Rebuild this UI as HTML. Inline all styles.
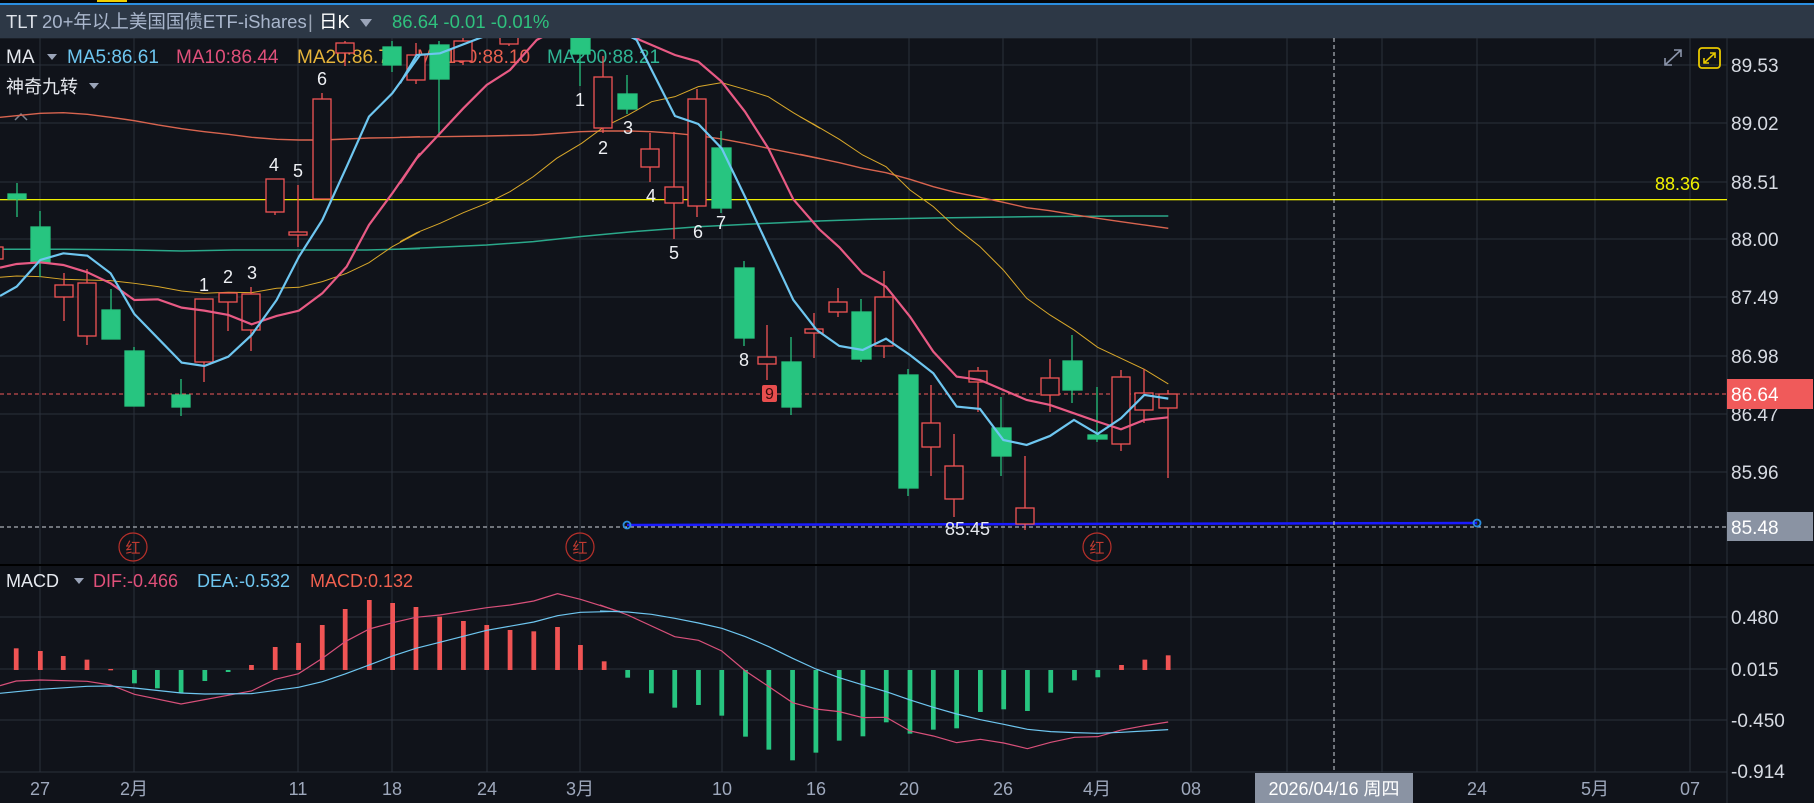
<!DOCTYPE html>
<html><head><meta charset="utf-8"><style>
html,body{margin:0;padding:0;background:#10131a;width:1814px;height:803px;overflow:hidden}
svg{display:block}
text{font-family:"Liberation Sans","Noto Sans CJK SC",sans-serif}
</style></head><body>
<svg width="1814" height="803" viewBox="0 0 1814 803" xmlns="http://www.w3.org/2000/svg">
<defs>
<clipPath id="mc"><rect x="0" y="38" width="1727" height="527"/></clipPath>
<clipPath id="dc"><rect x="0" y="566" width="1727" height="206"/></clipPath>
</defs>
<rect width="1814" height="803" fill="#10131a"/>
<!-- top bar -->
<rect x="0" y="0" width="1814" height="3" fill="#050608"/>
<rect x="97" y="0" width="30" height="2" fill="#f0d000"/>
<rect x="0" y="3" width="1814" height="2" fill="#2a8ee0"/>
<rect x="0" y="5" width="1814" height="33" fill="#2d3846"/>
<rect x="0" y="38" width="1814" height="1" fill="#1a1f27"/>
<text y="28" font-size="18.5"><tspan x="6" fill="#dfe3ea">TLT</tspan><tspan x="42" fill="#a9b6cc">20+年以上美国国债ETF-iShares</tspan><tspan x="308" fill="#9aa4b4">|</tspan><tspan x="319" fill="#ffffff">日K</tspan></text>
<path d="M360 19 L372 19 L366 27 Z" fill="#9aa4b8"/>
<text x="392" y="28" font-size="18.5" fill="#2fc27e">86.64 -0.01 -0.01%</text>

<!-- grid main -->
<g stroke="#2a303b" stroke-width="1">
<path d="M0 65H1727M0 123H1727M0 182H1727M0 239H1727M0 297H1727M0 356H1727M0 414H1727M0 472H1727"/>
<path d="M40 38V565M134 38V565M298 38V565M392 38V565M487 38V565M580 38V565M722 38V565M816 38V565M909 38V565M1003 38V565M1097 38V565M1191 38V565M1287 38V565M1382 38V565M1477 38V565M1595 38V565M1690 38V565"/>
<path d="M0 617H1727M0 669H1727M0 720H1727M0 772H1727"/>
<path d="M40 566V772M134 566V772M298 566V772M392 566V772M487 566V772M580 566V772M722 566V772M816 566V772M909 566V772M1003 566V772M1097 566V772M1191 566V772M1287 566V772M1382 566V772M1477 566V772M1595 566V772M1690 566V772"/>
<path d="M1727 38V803"/>
</g>
<rect x="0" y="564" width="1814" height="2" fill="#000"/>

<!-- legend -->
<text y="63" font-size="19"><tspan x="6" fill="#e6e9ef">MA</tspan><tspan x="67" fill="#6ec6f0">MA5:86.61</tspan><tspan x="176" fill="#e0507a">MA10:86.44</tspan><tspan x="297" fill="#e6b43a">MA20:86.73</tspan><tspan x="417" fill="#e8604f">MA100:88.10</tspan><tspan x="547" fill="#2fb594">MA200:88.21</tspan></text>
<path d="M47 54 L57 54 L52 60 Z" fill="#9aa4b8"/>
<text x="6" y="93" font-size="18" fill="#e6e9ef">神奇九转</text>
<path d="M89 83 L99 83 L94 89 Z" fill="#9aa4b8"/>
<path d="M15 120 L21 114 L27 120" fill="none" stroke="#7a8290" stroke-width="1.5"/>

<g clip-path="url(#mc)">
<rect x="0" y="199" width="1727" height="1.3" fill="#f0f000"/>
<g fill="none" stroke="#2aa88a" stroke-width="1.5">
<polyline vector-effect="non-scaling-stroke" transform="translate(0,40) scale(0.3333)" points="0,628 200,628 400,630 545,633 700,630 900,630 1100,630 1260,626"/>
<polyline vector-effect="non-scaling-stroke" transform="translate(400,40) scale(0.3333)" points="0,627 260,615 400,605 540,590 700,575 900,560 1100,550 1260,543"/>
<polyline vector-effect="non-scaling-stroke" transform="translate(800,40) scale(0.3333)" points="0,545 200,538 400,534 700,530 1000,528 1105,528"/>
</g>
<g fill="none" stroke="#d8644f" stroke-width="1.4">
<polyline vector-effect="non-scaling-stroke" transform="translate(0,40) scale(0.3333)" points="0,232 121,220 190,218 262,223 332,232 403,242 474,255 545,266 613,275 685,283 755,292 830,298 897,300 967,300 1040,297 1107,294 1177,293 1260,290"/>
<polyline vector-effect="non-scaling-stroke" transform="translate(400,40) scale(0.3333)" points="0,292 120,290 260,288 400,285 540,275 613,273 685,273 755,275 825,280 895,287 965,297 1035,310 1105,325 1180,340 1260,356"/>
<polyline vector-effect="non-scaling-stroke" transform="translate(800,40) scale(0.3333)" points="0,343 118,368 188,385 258,398 330,418 400,440 470,458 540,472 610,487 680,503 750,512 822,524 893,535 963,545 1033,555 1105,565"/>
</g>
<g fill="none" stroke="#d9a82a" stroke-width="1">
<polyline vector-effect="non-scaling-stroke" transform="translate(0,40) scale(0.3333)" points="0,712 50,708 121,710 190,718 262,720 332,722 403,730 474,740 545,753 613,760 685,757 755,758 830,745 897,742 967,725 1040,700 1107,668 1177,620 1260,575"/>
<polyline vector-effect="non-scaling-stroke" transform="translate(400,40) scale(0.3333)" points="0,605 50,578 120,550 190,518 260,490 330,455 400,410 470,355 545,310 613,260 685,225 755,185 825,170 895,140 965,128 1035,148 1105,170 1180,218 1260,265"/>
<polyline vector-effect="non-scaling-stroke" transform="translate(800,40) scale(0.3333)" points="0,230 45,255 118,298 188,345 258,380 330,450 400,500 470,565 540,620 610,690 680,775 750,825 822,870 893,922 963,955 1033,988 1105,1032"/>
</g>

<path d="M0 394H1727" stroke="#f05a5a" stroke-width="1" stroke-dasharray="4,3"/>
<path d="M0 527H1727" stroke="#d0d4dc" stroke-width="1" stroke-dasharray="4,3"/>
<path d="M627 525 L1477 523" stroke="#1a1aff" stroke-width="2.5"/>
<circle cx="627" cy="525" r="3.5" fill="none" stroke="#2a8ee0" stroke-width="1.8"/>
<circle cx="1477" cy="523" r="3.5" fill="none" stroke="#2a8ee0" stroke-width="1.8"/>

<g stroke-width="1.3">
<g stroke="#f05454" fill="#10131a">
<path d="M-6 240V262"/><rect x="-15" y="247" width="18" height="12"/>
<path d="M64 273V321"/><rect x="55" y="285" width="18" height="12"/>
<path d="M87 269V345"/><rect x="78" y="283" width="18" height="53"/>
<path d="M204 299V382"/><rect x="195" y="299" width="18" height="63"/>
<path d="M228 293V331"/><rect x="219" y="293" width="18" height="9"/>
<path d="M251 287V351"/><rect x="242" y="294" width="18" height="36"/>
<path d="M275 179V215"/><rect x="266" y="179" width="18" height="33"/>
<path d="M298 185V247"/><rect x="289" y="232" width="18" height="3"/>
<path d="M322 93V199"/><rect x="313" y="99" width="18" height="100"/>
<path d="M345 41V66"/><rect x="336" y="43" width="18" height="10"/>
<path d="M416 43V84"/><rect x="407" y="55" width="18" height="25"/>
<path d="M463 38V65"/><rect x="454" y="41" width="18" height="20"/>
<path d="M509 36V46"/><rect x="500" y="36" width="18" height="8"/>
<path d="M603 56V133"/><rect x="594" y="77" width="18" height="51"/>
<path d="M650 133V182"/><rect x="641" y="149" width="18" height="18"/>
<path d="M674 132V239"/><rect x="665" y="187" width="18" height="16"/>
<path d="M697 89V217"/><rect x="688" y="99" width="18" height="107"/>
<path d="M767 325V380"/><rect x="758" y="357" width="18" height="7"/>
<path d="M814 313V358"/><rect x="805" y="329" width="18" height="4"/>
<path d="M838 288V317"/><rect x="829" y="302" width="18" height="10"/>
<path d="M884 271V358"/><rect x="875" y="297" width="18" height="49"/>
<path d="M931 385V476"/><rect x="922" y="423" width="18" height="24"/>
<path d="M954 434V517"/><rect x="945" y="466" width="18" height="33"/>
<path d="M978 367V412"/><rect x="969" y="371" width="18" height="11"/>
<path d="M1025 456V530"/><rect x="1016" y="508" width="18" height="16"/>
<path d="M1050 359V412"/><rect x="1041" y="378" width="18" height="17"/>
<path d="M1121 370V451"/><rect x="1112" y="377" width="18" height="67"/>
<path d="M1144 369V423"/><rect x="1135" y="393" width="18" height="17"/>
<path d="M1168 390V478"/><rect x="1159" y="394" width="18" height="14"/>
</g>
<g stroke="#27c27e" fill="#27c580">
<path d="M17 183V217"/><rect x="8" y="194" width="18" height="5"/>
<path d="M40 211V277"/><rect x="31" y="227" width="19" height="36"/>
<path d="M111 289V339"/><rect x="102" y="310" width="18" height="29"/>
<path d="M134 347V406"/><rect x="125" y="351" width="19" height="55"/>
<path d="M181 379V416"/><rect x="172" y="395" width="18" height="12"/>
<path d="M392 41V72"/><rect x="383" y="47" width="18" height="18"/>
<path d="M439 41V136"/><rect x="430" y="45" width="19" height="34"/>
<path d="M580 36V86"/><rect x="571" y="36" width="19" height="18"/>
<path d="M627 75V114"/><rect x="618" y="94" width="19" height="15"/>
<path d="M721 131V213"/><rect x="712" y="148" width="19" height="60"/>
<path d="M744 261V346"/><rect x="735" y="268" width="19" height="70"/>
<path d="M791 337V415"/><rect x="782" y="362" width="19" height="45"/>
<path d="M861 299V362"/><rect x="852" y="312" width="19" height="47"/>
<path d="M908 369V496"/><rect x="899" y="375" width="19" height="113"/>
<path d="M1001 397V476"/><rect x="992" y="428" width="19" height="28"/>
<path d="M1072 335V403"/><rect x="1063" y="361" width="19" height="29"/>
<path d="M1097 387V442"/><rect x="1088" y="435" width="19" height="4"/>
</g>
</g>

<g fill="none" stroke="#e85a84" stroke-width="2.2">
<polyline vector-effect="non-scaling-stroke" transform="translate(0,40) scale(0.3333)" points="0,683 50,672 121,667 190,675 262,697 332,730 403,780 474,778 545,803 613,812 685,825 755,853 830,828 897,812 967,760 1040,680 1107,555 1177,460 1260,340"/>
<polyline vector-effect="non-scaling-stroke" transform="translate(400,40) scale(0.3333)" points="0,430 50,355 120,280 190,205 260,135 330,90 410,0 560,-80 720,0 825,45 895,65 965,125 1035,215 1105,325 1180,478 1260,570"/>
<polyline vector-effect="non-scaling-stroke" transform="translate(800,40) scale(0.3333)" points="60,570 118,622 188,700 258,740 330,830 400,935 470,1010 540,1020 610,1050 680,1080 750,1095 822,1120 893,1145 963,1168 1033,1140 1105,1132"/>
</g>
<g fill="none" stroke="#6ec6f0" stroke-width="2.2">
<polyline vector-effect="non-scaling-stroke" transform="translate(0,40) scale(0.3333)" points="0,768 50,740 121,660 190,640 262,647 332,700 403,822 474,895 545,968 613,978 685,950 755,885 830,780 897,650 967,540 1040,380 1107,230 1177,160 1260,45"/>
<polyline vector-effect="non-scaling-stroke" transform="translate(400,40) scale(0.3333)" points="0,130 50,45 120,40 250,-10 400,-80 600,-60 710,0 755,90 825,228 895,252 965,325 1035,470 1105,620 1180,780 1250,870"/>
<polyline vector-effect="non-scaling-stroke" transform="translate(800,40) scale(0.3333)" points="50,870 118,918 188,930 258,896 330,945 400,1000 470,1100 540,1107 610,1200 680,1215 750,1188 822,1140 893,1182 963,1135 1033,1065 1105,1076"/>
</g>

<g font-size="18" fill="#eef0f4" text-anchor="middle">
<text x="204" y="291">1</text><text x="228" y="283">2</text><text x="252" y="279">3</text>
<text x="274" y="171">4</text><text x="298" y="177">5</text><text x="322" y="85">6</text>
<text x="580" y="106">1</text><text x="603" y="154">2</text><text x="628" y="134">3</text>
<text x="651" y="202">4</text><text x="674" y="259">5</text><text x="698" y="238">6</text><text x="721" y="229">7</text>
<text x="744" y="366">8</text>
</g>
<rect x="762" y="385" width="15" height="17" rx="2" fill="#e84e4e"/>
<text x="769.5" y="399" font-size="16" fill="#3a0c0c" text-anchor="middle">9</text>
<text x="945" y="535" font-size="18" fill="#e6e9ef">85.45</text>
<g fill="none" stroke="#b8302a" stroke-width="1.2">
<circle cx="133" cy="547" r="14"/><circle cx="580" cy="547" r="14"/><circle cx="1097" cy="547" r="14"/>
</g>
<g font-size="15" fill="#c03a30" text-anchor="middle">
<text x="133" y="553">红</text><text x="580" y="553">红</text><text x="1097" y="553">红</text>
</g>
</g>

<text x="1700" y="190" font-size="18" fill="#f0f000" text-anchor="end">88.36</text>

<g fill="none" stroke="#8a94aa" stroke-width="1.6">
<path d="M1665 65 L1681 50 M1674 50 L1681 50 L1681 57 M1665 58 L1665 65 L1672 65"/>
</g>
<rect x="1699" y="48" width="21" height="20" rx="3" fill="none" stroke="#e8c800" stroke-width="1.8"/>
<g fill="none" stroke="#e8c800" stroke-width="1.6">
<path d="M1704 63 L1715 53 M1710 53 L1715 53 L1715 58 M1704 58 L1704 63 L1709 63"/>
</g>

<path d="M1334 38V773" stroke="#d0d4dc" stroke-width="1" stroke-dasharray="4,3"/>

<g clip-path="url(#dc)">
<g transform="translate(0,565) scale(0.3954,0.3333)">
<g fill="#f05454">
<rect x="35" y="250" width="12" height="65"/><rect x="96" y="258" width="12" height="57"/><rect x="154" y="273" width="12" height="42"/><rect x="214" y="284" width="12" height="31"/><rect x="274" y="312" width="12" height="4"/>
<rect x="630" y="300" width="12" height="15"/><rect x="690" y="246" width="12" height="69"/><rect x="749" y="234" width="12" height="81"/><rect x="809" y="180" width="12" height="135"/><rect x="867" y="132" width="12" height="183"/><rect x="928" y="105" width="12" height="210"/><rect x="987" y="114" width="12" height="201"/><rect x="1046" y="126" width="12" height="189"/><rect x="1106" y="155" width="12" height="160"/><rect x="1166" y="168" width="12" height="147"/><rect x="1225" y="180" width="12" height="135"/><rect x="1284" y="195" width="12" height="120"/><rect x="1344" y="199" width="12" height="116"/><rect x="1404" y="186" width="12" height="129"/><rect x="1462" y="240" width="12" height="75"/><rect x="1522" y="289" width="12" height="26"/>
</g>
<g fill="#27c580">
<rect x="334" y="315" width="12" height="40"/><rect x="392" y="315" width="12" height="55"/><rect x="452" y="315" width="12" height="69"/><rect x="512" y="315" width="12" height="33"/><rect x="571" y="315" width="12" height="6"/>
</g>
<polyline vector-effect="non-scaling-stroke" fill="none" stroke="#d8507a" stroke-width="1.2" points="0,362 41,348 102,345 220,349 280,360 340,388 458,417 636,378 696,343 755,326 815,280 873,230 934,192 993,173 1052,157 1112,150 1231,128 1290,120 1350,108 1410,86 1468,103 1568,140"/>
<polyline vector-effect="non-scaling-stroke" fill="none" stroke="#6ec6f0" stroke-width="1.2" points="0,385 102,373 220,364 280,363 340,369 458,384 518,387 636,386 755,367 815,350 873,327 934,300 993,273 1052,250 1112,232 1231,196 1350,171 1410,152 1468,142 1568,139"/>
</g>
<g transform="translate(600,565) scale(0.3954,0.3333)">
<g fill="#27c580">
<rect x="64" y="315" width="12" height="23"/><rect x="124" y="315" width="12" height="70"/><rect x="183" y="315" width="12" height="113"/><rect x="243" y="315" width="12" height="105"/><rect x="302" y="315" width="12" height="137"/><rect x="362" y="315" width="12" height="200"/><rect x="421" y="315" width="12" height="239"/><rect x="481" y="315" width="12" height="271"/><rect x="540" y="315" width="12" height="248"/><rect x="599" y="315" width="12" height="212"/><rect x="659" y="315" width="12" height="199"/><rect x="718" y="315" width="12" height="157"/><rect x="778" y="315" width="12" height="191"/><rect x="837" y="315" width="12" height="179"/><rect x="896" y="315" width="12" height="175"/><rect x="956" y="315" width="12" height="126"/><rect x="1015" y="315" width="12" height="118"/><rect x="1075" y="315" width="12" height="123"/><rect x="1134" y="315" width="12" height="68"/><rect x="1194" y="315" width="12" height="31"/><rect x="1253" y="315" width="12" height="22"/>
</g>
<g fill="#f05454">
<rect x="1313" y="300" width="12" height="15"/><rect x="1372" y="284" width="12" height="31"/><rect x="1431" y="271" width="12" height="44"/>
</g>
<polyline vector-effect="non-scaling-stroke" fill="none" stroke="#d8507a" stroke-width="1.2" points="0,120 70,150 189,215 249,226 308,258 368,318 427,365 487,413 546,432 605,440 665,458 724,457 784,498 843,513 902,533 962,523 1021,534 1081,551 1140,532 1200,517 1259,515 1319,495 1378,482 1437,471"/>
<polyline vector-effect="non-scaling-stroke" fill="none" stroke="#6ec6f0" stroke-width="1.2" points="0,138 70,141 130,148 189,160 249,174 308,190 368,215 427,245 487,280 546,312 605,338 665,360 724,380 784,405 843,427 902,447 962,464 1021,478 1081,493 1140,500 1200,503 1259,505 1319,502 1378,498 1437,494"/>
</g>
</g>
<text y="587" font-size="18"><tspan x="6" fill="#e6e9ef">MACD</tspan><tspan x="93" fill="#e0507a">DIF:-0.466</tspan><tspan x="197" fill="#6ec6f0">DEA:-0.532</tspan><tspan x="310" fill="#f0604f">MACD:0.132</tspan></text>
<path d="M74 578 L84 578 L79 584 Z" fill="#9aa4b8"/>

<g font-size="19" fill="#d6dae2">
<text x="1731" y="72">89.53</text><text x="1731" y="130">89.02</text><text x="1731" y="189">88.51</text><text x="1731" y="246">88.00</text><text x="1731" y="304">87.49</text><text x="1731" y="363">86.98</text><text x="1731" y="421">86.47</text><text x="1731" y="479">85.96</text>
<text x="1731" y="624">0.480</text><text x="1731" y="676">0.015</text><text x="1731" y="727">-0.450</text><text x="1731" y="778">-0.914</text>
</g>
<rect x="1727" y="379" width="86" height="30" fill="#f05a5a"/>
<text x="1731" y="401" font-size="19" fill="#ffffff">86.64</text>
<rect x="1727" y="512" width="86" height="29" fill="#8a93a3"/>
<text x="1731" y="534" font-size="19" fill="#ffffff">85.48</text>

<g font-size="18" fill="#9ea8bc" text-anchor="middle">
<text x="40" y="795">27</text><text x="134" y="795">2月</text><text x="298" y="795">11</text><text x="392" y="795">18</text><text x="487" y="795">24</text><text x="580" y="795">3月</text><text x="722" y="795">10</text><text x="816" y="795">16</text><text x="909" y="795">20</text><text x="1003" y="795">26</text><text x="1097" y="795">4月</text><text x="1191" y="795">08</text><text x="1477" y="795">24</text><text x="1595" y="795">5月</text><text x="1690" y="795">07</text>
</g>
<rect x="1255" y="773" width="158" height="30" fill="#8a93a3"/>
<text x="1334" y="795" font-size="18" fill="#ffffff" text-anchor="middle">2026/04/16 周四</text>
</svg>
</body></html>
